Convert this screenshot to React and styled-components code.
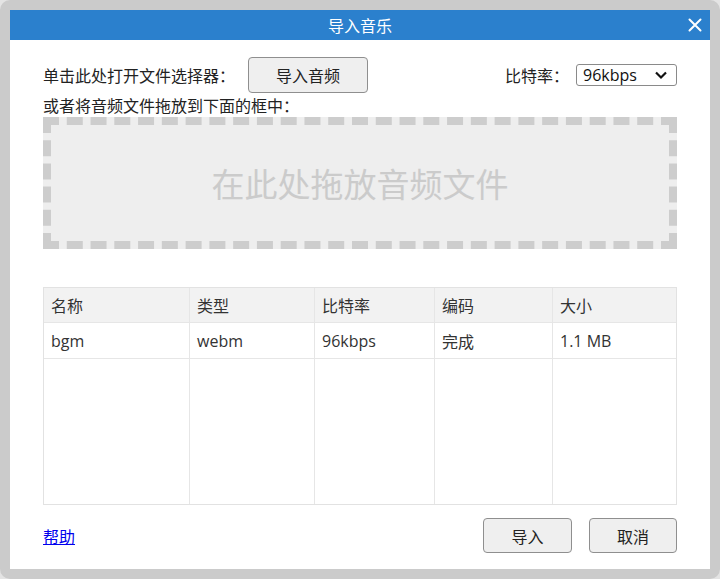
import React from 'react';
import styled, { createGlobalStyle } from 'styled-components';

// 表格数据
const columns = [
    { title: '名称', width: 146 },
    { title: '类型', width: 125 },
    { title: '比特率', width: 120 },
    { title: '编码', width: 118 },
    { title: '大小', width: 125 },
];

const rows = [
    ['bgm', 'webm', '96kbps', '完成', '1.1 MB'],
];

const App = () => {
    return (
        <>
            <GlobalStyle />
            <Dialog>
                <TitleBar>
                    导入音乐
                    <CloseButton aria-label="close">
                        <svg width="14" height="14" viewBox="0 0 14 14">
                            <path d="M1.5 1.5 L12.5 12.5 M12.5 1.5 L1.5 12.5" stroke="#fff" strokeWidth="2" strokeLinecap="round" />
                        </svg>
                    </CloseButton>
                </TitleBar>
                <Body>
                    <TopRow>
                        <Label $gap={13}>单击此处打开文件选择器：</Label>
                        <Button $width={120} $height={36}>导入音频</Button>
                        <Spacer />
                        <Label $gap={7}>比特率：</Label>
                        <Select>
                            96kbps
                            <svg width="14" height="10" viewBox="0 0 14 10">
                                <path d="M2 2.5 L7 7.5 L12 2.5" stroke="#111" strokeWidth="2.2" fill="none" />
                            </svg>
                        </Select>
                    </TopRow>
                    <HintRow>或者将音频文件拖放到下面的框中：</HintRow>
                    <DropZone>在此处拖放音频文件</DropZone>
                    <Table>
                        {columns.map((c, i) => (
                            <HeadCell key={c.title} $last={i === columns.length - 1}>{c.title}</HeadCell>
                        ))}
                        {rows.map((r) =>
                            r.map((v, i) => (
                                <Cell key={i} $last={i === r.length - 1}>{v}</Cell>
                            ))
                        )}
                        {columns.map((c, i) => (
                            <FillCell key={'f' + i} $last={i === columns.length - 1} />
                        ))}
                    </Table>
                    <Footer>
                        <HelpLink href="#">帮助</HelpLink>
                        <Spacer />
                        <Button $width={89} $height={35}>导入</Button>
                        <Button $width={88} $height={35}>取消</Button>
                    </Footer>
                </Body>
            </Dialog>
        </>
    );
};

export default App;

const GlobalStyle = createGlobalStyle`
    body {
        margin: 0;
        padding: 0;
        background: #e4e4e4;
        font-family: "Noto Sans CJK SC", "Noto Sans", sans-serif;
        overflow: hidden;
    }
`;

const Dialog = styled.div`
    box-sizing: border-box;
    width: 720px;
    height: 579px;
    border: 10px solid #cbcbcb;
    border-radius: 10px;
    background: #fff;
    display: flex;
    flex-direction: column;
`;

const TitleBar = styled.div`
    height: 30px;
    background: #2b80cd;
    color: #fff;
    font-size: 16px;
    display: flex;
    align-items: center;
    justify-content: center;
    position: relative;
`;

const CloseButton = styled.div`
    position: absolute;
    right: 8px;
    top: 8px;
    width: 14px;
    height: 14px;
    display: flex;
    cursor: pointer;
`;

const Body = styled.div`
    flex: 1;
    padding: 17px 33px 16px;
    display: flex;
    flex-direction: column;
`;

const TopRow = styled.div`
    height: 36px;
    display: flex;
    align-items: center;
`;

const Label = styled.span`
    font-size: 16px;
    color: #222;
    margin-right: ${(p) => p.$gap}px;
`;

const Spacer = styled.div`
    flex: 1;
`;

const Button = styled.div`
    box-sizing: border-box;
    width: ${(p) => p.$width}px;
    height: ${(p) => p.$height}px;
    background: #efefef;
    border: 1px solid #8f8f8f;
    border-radius: 4px;
    font-size: 16px;
    color: #222;
    display: flex;
    align-items: center;
    justify-content: center;
    cursor: pointer;
    & + & {
        margin-left: 17px;
    }
`;

const Select = styled.div`
    box-sizing: border-box;
    width: 101px;
    height: 22px;
    border: 1px solid #8a8a8a;
    border-radius: 3px;
    padding: 0 8px 0 6px;
    font-family: "Open Sans", sans-serif;
    font-size: 16px;
    color: #111;
    display: flex;
    align-items: center;
    justify-content: space-between;
`;

const HintRow = styled.div`
    height: 24px;
    font-size: 16px;
    color: #222;
    display: flex;
    align-items: center;
`;

const DropZone = styled.div`
    box-sizing: border-box;
    height: 132px;
    border: 8px dashed #cdcdcd;
    background: #eeeeee;
    color: #cbcbcb;
    font-size: 33px;
    display: flex;
    align-items: center;
    justify-content: center;
`;

const Table = styled.div`
    box-sizing: border-box;
    margin-top: 38px;
    height: 218px;
    border: 1px solid #e2e2e2;
    display: grid;
    grid-template-columns: ${columns.map((c) => c.width + 'px').slice(0, -1).join(' ')} 1fr;
    grid-template-rows: 35px 36px 1fr;
    font-size: 16px;
    color: #333;
`;

const Cell = styled.div`
    border-right: ${(p) => (p.$last ? 'none' : '1px solid #e6e6e6')};
    border-bottom: 1px solid #e6e6e6;
    padding-left: 7px;
    display: flex;
    align-items: center;
    font-family: "Open Sans", "Noto Sans CJK SC", sans-serif;
`;

const HeadCell = styled(Cell)`
    background: #f2f2f2;
    font-family: "Noto Sans CJK SC", sans-serif;
`;

const FillCell = styled(Cell)`
    border-bottom: none;
`;

const Footer = styled.div`
    margin-top: 13px;
    display: flex;
    align-items: center;
`;

const HelpLink = styled.a`
    font-size: 16px;
    color: #0000ee;
    text-decoration: underline;
`;
